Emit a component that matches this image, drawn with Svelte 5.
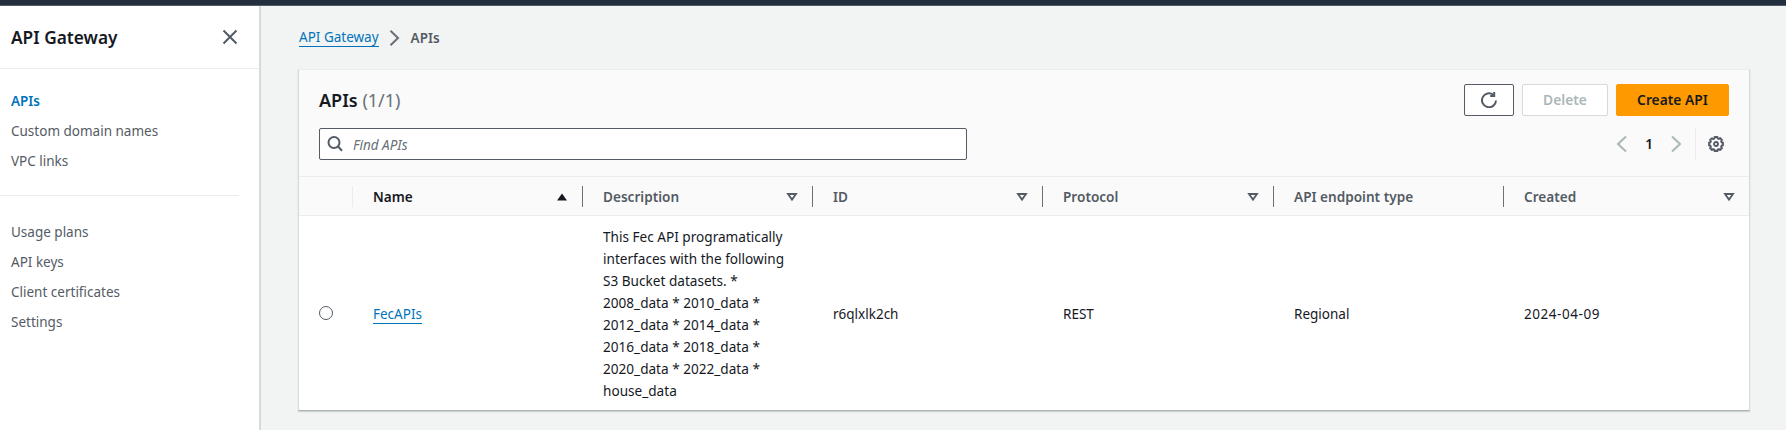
<script>
  const nav1 = ['Custom domain names', 'VPC links'];
  const nav2 = ['Usage plans', 'API keys', 'Client certificates', 'Settings'];
  const cols = [
    { label: 'Description', value: 'This Fec API programatically interfaces with the following S3 Bucket datasets. * 2008_data * 2010_data * 2012_data * 2014_data * 2016_data * 2018_data * 2020_data * 2022_data * house_data', filter: true },
    { label: 'ID', value: 'r6qlxlk2ch', filter: true },
    { label: 'Protocol', value: 'REST', filter: true },
    { label: 'API endpoint type', value: 'Regional', filter: false },
    { label: 'Created', value: '2024-04-09', filter: true, last: true }
  ];
</script>

<div class="page">
  <div class="topbar"></div>
  <div class="body">
    <aside class="side">
      <div class="side-head">
        <span class="side-title">API Gateway</span>
        <svg class="close" width="16" height="16" viewBox="0 0 16 16"><path d="M1.5 1.5l13 13M14.5 1.5l-13 13" /></svg>
      </div>
      <nav class="nav">
        <a class="active">APIs</a>
        {#each nav1 as n}<a>{n}</a>{/each}
        <div class="nav-div"></div>
        {#each nav2 as n}<a>{n}</a>{/each}
      </nav>
    </aside>
    <main class="main">
      <div class="crumbs">
        <a class="link">API Gateway</a>
        <svg width="16" height="16" viewBox="0 0 16 16" class="crumb-sep"><path d="M4.5 0.8L12 8 4.5 15.2" /></svg>
        <span class="crumb-cur">APIs</span>
      </div>
      <section class="card">
        <div class="card-head">
          <div class="row1">
            <h1>APIs <span>(1/1)</span></h1>
            <div class="actions">
              <button class="btn refresh" aria-label="Refresh">
                <svg width="16" height="16" viewBox="0 0 16 16"><path d="M15 8.5A7 7 0 1 1 12.4 2.8" /><path d="M13.2 0V4H9.2" /></svg>
              </button>
              <button class="btn del">Delete</button>
              <button class="btn create">Create API</button>
            </div>
          </div>
          <div class="row2">
            <div class="search">
              <svg width="16" height="16" viewBox="0 0 16 16"><circle cx="7" cy="6.5" r="5.5" /><path d="M11 10.5L15 14.8" /></svg>
              <span>Find APIs</span>
            </div>
            <div class="pager">
              <svg class="pg" width="16" height="16" viewBox="0 0 16 16"><path d="M12 .5L4 8l8 7.5" /></svg>
              <b>1</b>
              <svg class="pg" width="16" height="16" viewBox="0 0 16 16"><path d="M4 .5L12 8l-8 7.5" /></svg>
              <i class="pg-div"></i>
              <svg class="gear" width="16" height="16" viewBox="0 0 16 16">
                <path d="M6.5 1v1.5l-1.4.6-1.1-1L2 4l1 1.1-.6 1.4H1v3h1.4L3 10.9 2 12l2 2 1.1-1 1.4.6V15h3v-1.4l1.4-.6 1.1 1 2-2-1-1.1.6-1.4H15v-3h-1.4L13 5.1 14 4l-2-2-1.1 1-1.4-.6V1z" />
                <circle cx="8" cy="8" r="2" />
              </svg>
            </div>
          </div>
        </div>
        <div class="table">
          <div class="th sel"><i class="sep light"></i></div>
          <div class="th name">
            <span>Name</span>
            <svg width="12" height="10" viewBox="0 0 12 10"><path d="M6 1.5L11 8.5H1z" class="solid" /></svg>
            <i class="sep"></i>
          </div>
          {#each cols as c}
            <div class="th" class:last={c.last}>
              <span>{c.label}</span>
              {#if c.filter}
                <svg width="12" height="10" viewBox="0 0 12 10"><path d="M2 2H10L6 7.6z" class="hollow" /></svg>
              {/if}
              {#if !c.last}<i class="sep"></i>{/if}
            </div>
          {/each}
          <div class="td sel"><span class="radio"></span></div>
          <div class="td"><a class="link">FecAPIs</a></div>
          {#each cols as c}
            <div class="td" class:desc={c.label === 'Description'} class:date={c.last}>{c.value}</div>
          {/each}
        </div>
      </section>
    </main>
  </div>
</div>

<style>
  :global(body) { margin: 0; background: #f2f3f3; }
  .page {
    width: 1786px; height: 430px; overflow: hidden; background: #f2f3f3;
    font: 13.5px/20px "Noto Sans", sans-serif; color: #16191f;
  }
  .topbar { height: 6px; background: #232f3e; border-bottom: 1px solid #545b64; box-sizing: border-box; }
  .body { display: flex; height: 424px; }
  .side { width: 261px; box-sizing: border-box; background: #fff; border-right: 2px solid #d5dbdb; flex: none; }
  .side-head {
    height: 62px; display: flex; align-items: center; justify-content: space-between;
    padding: 0 21px 0 11px; border-bottom: 1px solid #eaeded;
  }
  .side-title { font-size: 17.3px; font-weight: 600; line-height: 24px; padding-top: 2px; }
  .close path { fill: none; stroke: #545b64; stroke-width: 2; }
  .nav { display: flex; flex-direction: column; padding: 16px 0 0 11px; }
  .nav a { height: 30px; line-height: 32px; color: #545b64; }
  .nav a.active { color: #0073bb; font-weight: 600; }
  .nav-div { height: 1px; background: #eaeded; width: 239px; margin: 20px 0 20px -11px; }
  .main { flex: 1; padding: 0 36px 0 37px; min-width: 0; }
  .crumbs { height: 63px; display: flex; align-items: center; padding-left: 1px; }
  .link { color: #0073bb; border-bottom: 1px solid #0073bb; line-height: 18px; }
  .crumb-sep { margin: 0 9px 0 7px; }
  .crumb-sep path { fill: none; stroke: #687078; stroke-width: 2; }
  .crumb-cur { font-weight: 600; color: #545b64; }
  .card {
    background: #fff; border-left: 1px solid #d5dbdb; border-right: 1px solid #d5dbdb;
    border-top: 1px solid #eaeded; border-bottom: 1px solid #aab7b8;
    box-shadow: 0 1px 1px rgba(0, 28, 36, 0.15); height: 342px; box-sizing: border-box;
  }
  .card-head { background: #fafafa; height: 107px; border-bottom: 1px solid #eaeded; padding: 14px 20px 0; box-sizing: border-box; }
  .row1 { display: flex; justify-content: space-between; align-items: flex-start; height: 44px; }
  h1 { margin: 4px 0 0; font-size: 18px; line-height: 24px; font-weight: 600; }
  h1 span { font-weight: 400; color: #687078; }
  .actions { display: flex; gap: 8px; }
  .btn {
    height: 32px; box-sizing: border-box; font: 600 13.8px/20px "Noto Sans", sans-serif;
    border-radius: 2px; padding: 0; display: flex; align-items: center; justify-content: center;
  }
  .refresh { width: 50px; border: 1px solid #545b64; background: #fff; }
  .refresh path { fill: none; stroke: #545b64; stroke-width: 2; }
  .del { width: 86px; border: 1px solid #d5dbdb; background: #fff; color: #aab7b8; }
  .create { width: 113px; border: 1px solid #ff9900; background: #ff9900; color: #16191f; }
  .row2 { display: flex; justify-content: space-between; align-items: center; height: 32px; }
  .search {
    width: 648px; height: 32px; box-sizing: border-box; border: 1px solid #545b64; border-radius: 2px;
    background: #fff; display: flex; align-items: center; padding-left: 7px; gap: 10px;
    font-style: italic; color: #687078;
  }
  .search span { padding-top: 2px; }
  .search svg * { fill: none; stroke: #545b64; stroke-width: 2; }
  .pager { display: flex; align-items: center; padding-right: 5px; }
  .pg path { fill: none; stroke: #aab7b8; stroke-width: 2; }
  .pager b { width: 38px; text-align: center; font-weight: 600; }
  .pg-div { width: 1px; height: 32px; background: #eaeded; margin: 0 12px 0 11px; }
  .gear * { fill: none; stroke: #545b64; stroke-width: 1.8; stroke-linejoin: round; }
  .table { display: grid; grid-template-columns: 54px 230px 230px 230px 231px 230px 1fr; }
  .th {
    height: 39px; border-bottom: 1px solid #eaeded; background: #fafafa; color: #545b64; font-weight: 600;
    font-size: 13.6px; display: flex; align-items: center; justify-content: space-between; position: relative;
    padding: 1px 15px 0 20px; box-sizing: border-box;
  }
  .th.name { color: #16191f; }
  .th.last { padding-right: 14px; }
  .th.sel { padding: 0; }
  .sep { position: absolute; right: 0; top: 9px; height: 21px; width: 1px; background: #687078; }
  .sep.light { background: #eaeded; }
  .solid { fill: #16191f; }
  .hollow { fill: none; stroke: #545b64; stroke-width: 1.8; }
  .td { height: 194px; display: flex; align-items: center; padding: 2px 20px 0; box-sizing: border-box; line-height: 22px; }
  .td.desc { padding-right: 26px; font-size: 13.6px; }
  .td.date { letter-spacing: 0.55px; }
  .td.sel { padding: 0 0 0 20px; }
  .radio { width: 14px; height: 14px; box-sizing: border-box; border: 1px solid #545b64; border-radius: 50%; display: block; }
</style>
